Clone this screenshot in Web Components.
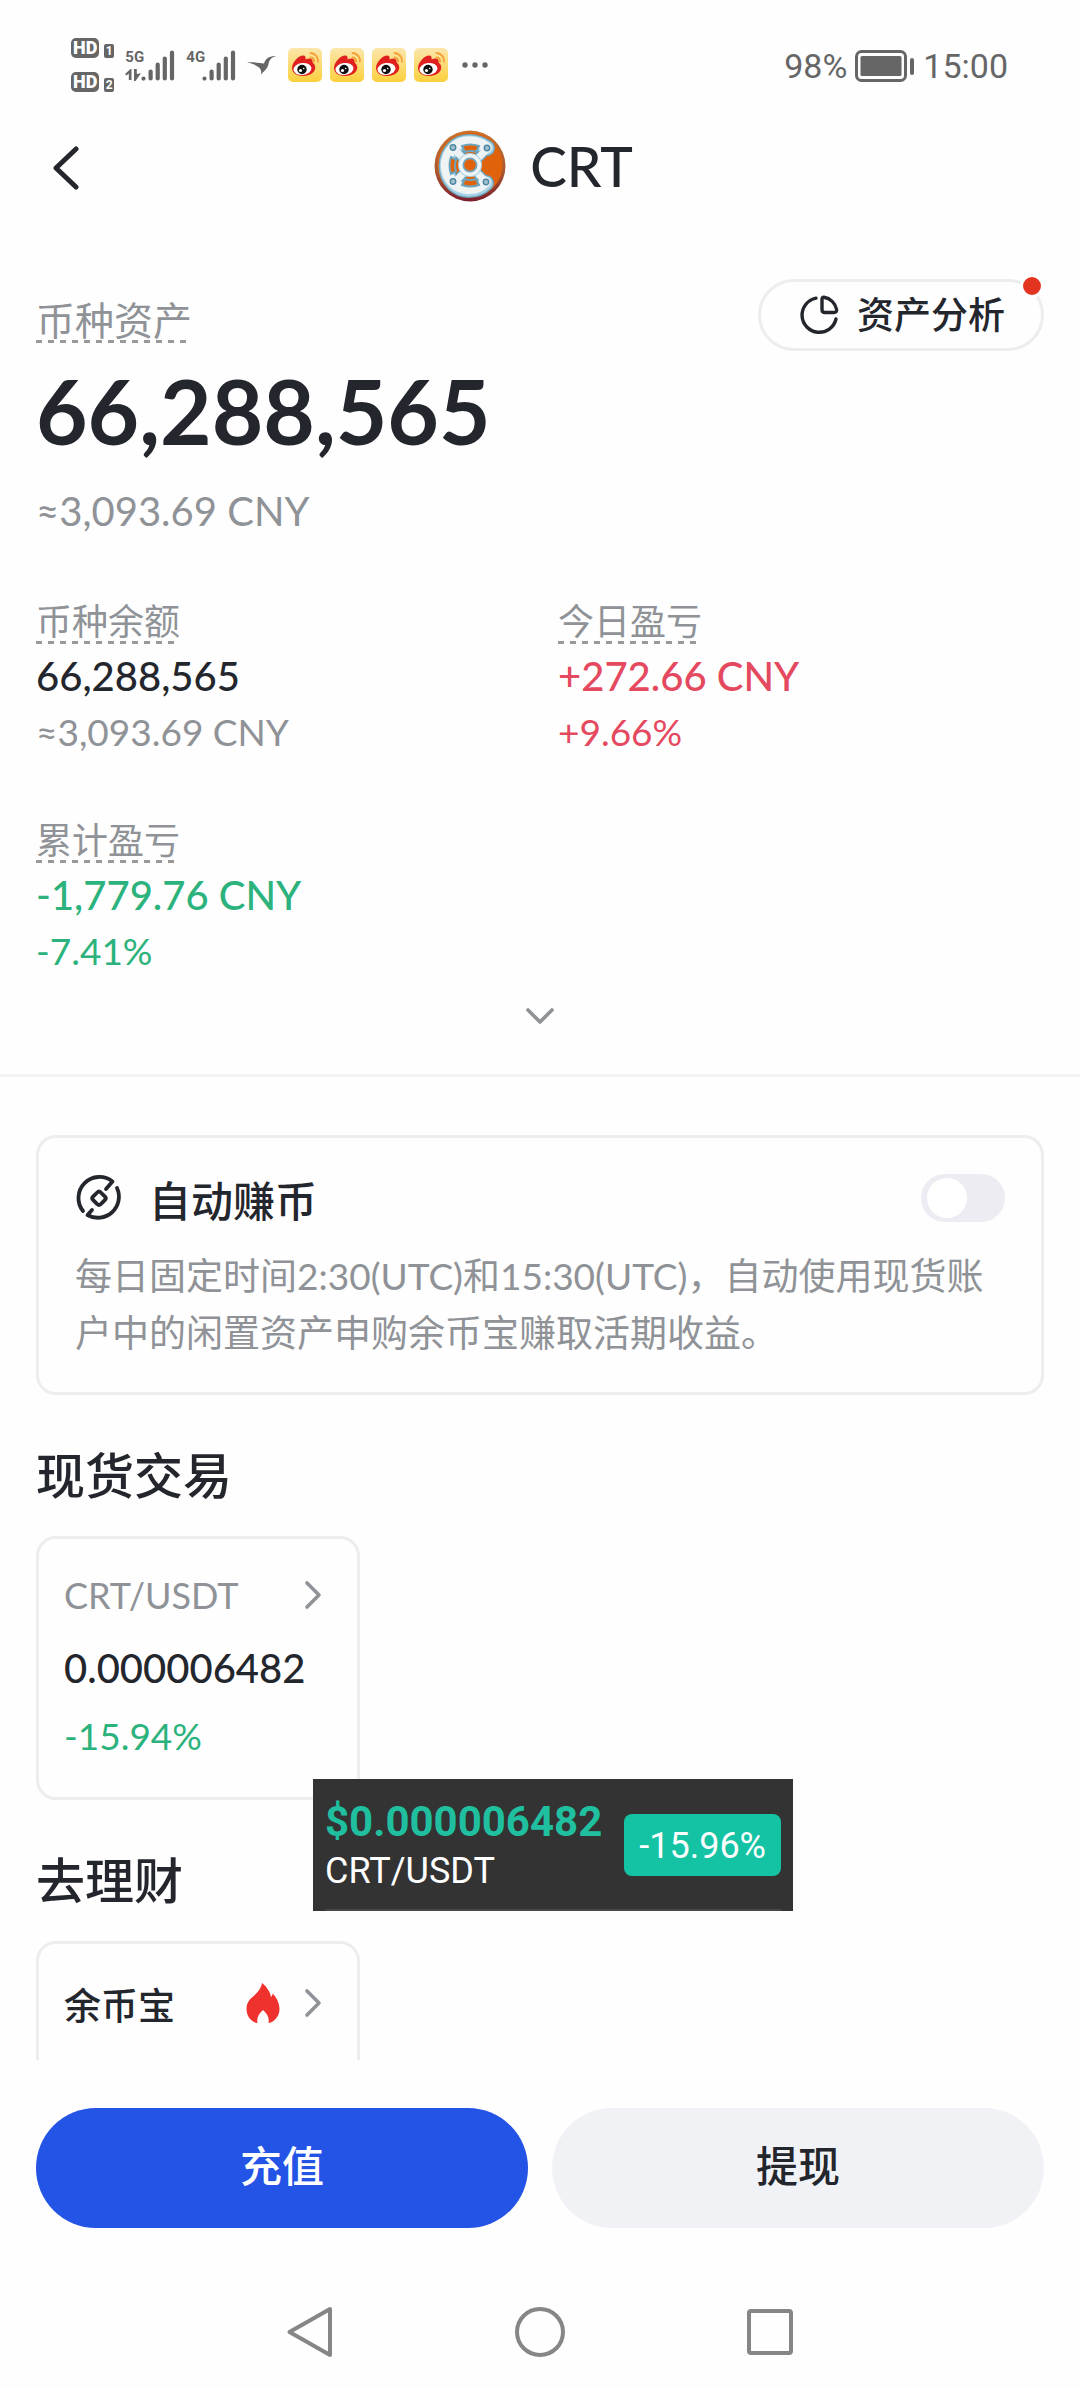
<!DOCTYPE html>
<html lang="zh-CN">
<head>
<meta charset="utf-8">
<meta name="viewport" content="width=device-width, initial-scale=1">
<title>CRT</title>
<style>
  :root {
    --ink: #24262d;
    --muted: #8f9296;
    --line: #ededef;
    --up: #e4495f;
    --down: #2cb27c;
    --brand: #2354e6;
    --sys: #666;
  }
  body {
    margin: 0;
    background: #fefefe;
    color: var(--ink);
    font-family: Lato, "Noto Sans CJK SC", sans-serif;
  }
</style>
</head>
<body>
<asset-page></asset-page>

<script>
const RESET = `
  *, *::before, *::after { box-sizing: border-box; }
  button { font: inherit; color: inherit; background: none; border: 0; margin: 0; padding: 0; cursor: pointer; }
  a { color: inherit; text-decoration: none; }
  h1, h2, p { margin: 0; font-weight: inherit; }
`;

function define(name, markup, setup) {
  const template = document.createElement('template');
  template.innerHTML = markup;
  customElements.define(name, class extends HTMLElement {
    constructor() {
      super();
      this.attachShadow({ mode: 'open' }).append(template.content.cloneNode(true));
    }
    connectedCallback() { if (setup) setup(this, this.shadowRoot); }
  });
}

/* name: [width, height, drawing] */
const ICONS = {
  back: [28, 46, '<path d="M25 4 5 23 25 42" fill="none" stroke="#24262d" stroke-width="5" stroke-linecap="round" stroke-linejoin="round"/>'],
  down: [28, 18, '<path d="M2 3 14 15 26 3" fill="none" stroke="#8f9296" stroke-width="3.6" stroke-linecap="round" stroke-linejoin="round"/>'],
  right: [18, 30, '<path d="M3 3 15 15 3 27" fill="none" stroke="#8f9296" stroke-width="3.6" stroke-linecap="round" stroke-linejoin="round"/>'],
  pie: [40, 40, '<g fill="none" stroke="#24262d" stroke-width="3.4" stroke-linecap="round" stroke-linejoin="round"><path d="M17 3.2A17.2 17.2 0 1 0 37 24"/><path d="M23 4.5v10q0 3 3 3h9q3 0 2.600-3A15.500 15.500 0 0 0 25 2.200q-2 0-2 2.300z"/></g>'],
  coin: [48, 48, '<g fill="none" stroke="#24262d" stroke-width="3.800" stroke-linecap="round" stroke-linejoin="round"><path d="M31 15 37.500 7.500A21 21 0 0 0 8 37"/><path d="M17 36 12.500 41A21 21 0 0 0 42 14"/><path d="M22.200 18.500q1.800-1.800 3.600 0l4.200 4.200q1.600 1.600 0 3.200l-4.200 4.200q-1.800 1.600-3.600 0L18 25.900q-1.600-1.600 0-3.200z"/></g>'],
  flame: [34, 42, '<path d="M16 1C20 4 24 9 25 15c1-1 1.500-2 1.700-3.500C31 16 33.500 22 33.500 27c0 7-5 13-11 14 1-5-1-9-5.500-13-4.500 4-6.500 8-5.500 13C5 40 .5 34 .5 27c0-6 3-9.500 6-12C11 11 15 7 16 1z" fill="#f0322e"/>'],
  signal: [34, 31, '<g stroke="#666" stroke-width="4.200" stroke-linecap="round"><path d="M2.500 28.500v.1M9.600 21.500v7M16.700 14.500v14M23.800 8.500v20M31 2.500v26"/></g>'],
  arrows: [16, 12, '<path d="M0 5 5.500 0h1v11H3.800V4.500L1.500 6.500zM9 0h2.800v5L16 4.200 10.500 12H9z" fill="#666"/>'],
  bird: [30, 20, '<path d="M0 7.500C7 7 13 8 17 8.500 19 3 22 1 29.500 1 24 2.500 22.500 4.500 21.500 9c-1 5-4.500 7-7.500 10.500.5-3 0-5.500-2-7C9 10 6 8.500 0 7.500z" fill="#666"/>'],
  dots: [26, 6, '<g fill="#666"><circle cx="3" cy="3" r="2.700"/><circle cx="13" cy="3" r="2.700"/><circle cx="23" cy="3" r="2.700"/></g>'],
  battery: [60, 32, '<rect x="1.500" y="1.500" width="49" height="29" rx="5" fill="none" stroke="#666" stroke-width="3"/><rect x="5.500" y="6" width="41" height="20" rx="1.500" fill="#666"/><rect x="55" y="8" width="4" height="17" rx="2" fill="#666"/>'],
  weibo: [34, 34, '<defs><linearGradient id="y" x1="0" y1="0" x2="0" y2="1"><stop offset="0" stop-color="#fbe6ac"/><stop offset="1" stop-color="#fbd03d"/></linearGradient></defs><rect width="34" height="34" rx="5" fill="url(#y)"/><path d="M4 20C4 14 11 7.500 15 7.500c2.500 0 3 2 2.500 4 3-1.800 7.500-1.600 7 2 0 1.200 1 2 2 3 3 6-3 11.500-11.500 11.500C9 28 4 25 4 20z" fill="#e0201f"/><ellipse cx="14.500" cy="21" rx="9" ry="6" fill="#fff" transform="rotate(-6 14.500 21)"/><circle cx="14" cy="21.500" r="4.700" fill="#111"/><circle cx="12.500" cy="22.500" r="1.600" fill="#fff"/><circle cx="15.700" cy="20.500" r=".8" fill="#fff"/><path d="M22.500 5A8 8 0 0 1 30 13.500M22.500 9.500a4 4 0 0 1 3.600 4" fill="none" stroke="#f3a03a" stroke-width="1.900" stroke-linecap="round"/>'],
  navback: [50, 54, '<path d="M45 4V50L4.500 27z" fill="none" stroke="#868686" stroke-width="4" stroke-linejoin="round"/>'],
  navhome: [50, 54, '<circle cx="25" cy="27" r="23" fill="none" stroke="#868686" stroke-width="4"/>'],
  navtask: [50, 54, '<rect x="4" y="6" width="42" height="42" rx="2" fill="none" stroke="#868686" stroke-width="4"/>'],
  crt: [72, 72, `<defs><linearGradient id="rim" x1="0" y1="0" x2="0" y2="1"><stop offset="0" stop-color="#c97330"/><stop offset=".6" stop-color="#a9552f"/><stop offset="1" stop-color="#7a1d2c"/></linearGradient></defs>
    <circle cx="36" cy="36" r="35.500" fill="url(#rim)"/><circle cx="36" cy="35" r="32.500" fill="#e0630b"/>
    <g fill="none" stroke-linecap="round" stroke-linejoin="round">
      <path d="M53 18C42 10 28 10 20 18 10 28 10 44 20 54 28 62 43 62 52 53" stroke="#6ba5bf" stroke-width="16"/>
      <path d="M20 19 52 52M53 19 20 53" stroke="#6ba5bf" stroke-width="10"/>
      <path d="M53 18C42 10 28 10 20 18 10 28 10 44 20 54 28 62 43 62 52 53" stroke="#a9d3e4" stroke-width="13.500"/>
      <path d="M52.500 17.500C42 9.500 28 9.500 19.500 17.500 9.500 28 9.500 43 19.500 53 28 61 43 61 51.500 52" stroke="#f0f3f4" stroke-width="10.500"/>
      <path d="M20 19 52 52M53 19 20 53" stroke="#edf2f4" stroke-width="7"/>
    </g>
    <circle cx="36" cy="35" r="12" fill="#a9d3e4"/><circle cx="36" cy="35" r="11" fill="#eef3f5"/><circle cx="36" cy="35" r="7.500" fill="#6fa6be"/><circle cx="36" cy="35" r="5.800" fill="#e0630b"/>
    <path d="M28 16q8-3 17 0l-3 6q-5-2-11 0zM28 55q8 3 17 0l-3-6q-5 2-11 0zM17 27q-3 8 0 17l5-3q-2-5 0-11z" fill="#e0630b" stroke="#6ba5bf" stroke-width="2"/>
    <g fill="#a5c3cf" stroke="#4d88a5" stroke-width="1.500"><circle cx="19" cy="17.500" r="2.700"/><circle cx="53" cy="18" r="2.700"/><circle cx="19" cy="51.500" r="2.700"/><circle cx="52" cy="52" r="2.700"/></g>`]
};

define('ui-icon', `<style>:host { display: block; flex: none; } svg { display: block; }</style>`, (el, root) => {
  const [w, h, art] = ICONS[el.getAttribute('name')];
  root.innerHTML += `<svg width="${w}" height="${h}" viewBox="0 0 ${w} ${h}" aria-hidden="true">${art}</svg>`;
});

define('hd-badge', `<style>
  :host { display: flex; align-items: flex-end; gap: 5px; font: bold 18px/20px Roboto, sans-serif; }
  b { padding: 0 2px; border-radius: 5px; background: var(--sys); color: #fff; }
  i { font: bold 12px/14px Roboto, sans-serif; width: 10px; text-align: center; border-radius: 2px; background: var(--sys); color: #fff; }
</style><b>HD</b><i><slot></slot></i>`);

define('status-bar', `<style>${RESET}
  :host { display: flex; justify-content: space-between; align-items: center; height: 130px; padding: 0 72px 0 71px; color: var(--sys); font-family: Roboto, sans-serif; }
  .left, .right, .cell, .apps { display: flex; align-items: center; }
  .left { gap: 11px; }
  .hd { display: grid; gap: 14px; }
  .cell { align-items: flex-end; }
  .gen { font: bold 15px/16px Roboto, sans-serif; width: 16px; height: 32px; display: grid; align-content: space-between; }
  .apps { gap: 8px; }
  .apps ui-icon:last-child { margin-left: 6px; }
  .right { gap: 8px; font-size: 34px; line-height: 40px; padding-top: 2px; }
</style>
<div class="left">
  <div class="hd"><hd-badge>1</hd-badge><hd-badge>2</hd-badge></div>
  <div class="cell"><span class="gen">5G<ui-icon name="arrows"></ui-icon></span><ui-icon name="signal"></ui-icon></div>
  <div class="cell"><span class="gen">4G</span><ui-icon name="signal"></ui-icon></div>
  <ui-icon name="bird"></ui-icon>
  <div class="apps"><ui-icon name="weibo"></ui-icon><ui-icon name="weibo"></ui-icon><ui-icon name="weibo"></ui-icon><ui-icon name="weibo"></ui-icon><ui-icon name="dots"></ui-icon></div>
</div>
<div class="right"><span>98%</span><ui-icon name="battery"></ui-icon><span>15:00</span></div>`);

define('page-header', `<style>${RESET}
  :host { display: grid; grid-template-columns: 1fr auto 1fr; align-items: center; height: 72px; padding: 0 64px 0 51px; }
  h1 { display: flex; align-items: center; gap: 24px; font-size: 55px; font-weight: 500; line-height: 70px; }
  button { justify-self: start; padding-top: 4px; }
</style>
<button aria-label="返回"><ui-icon name="back"></ui-icon></button>
<h1><ui-icon name="crt"></ui-icon><slot></slot></h1>`);

/* Caption with a dashed underline */
define('hint-label', `<style>
  :host { display: block; width: fit-content; font-size: 36px; line-height: 42px; height: 44px; color: var(--muted);
    background: repeating-linear-gradient(90deg, #999 0 6px, transparent 6px 12px) left bottom / 100% 3px no-repeat; }
</style><slot></slot>`);

define('analysis-button', `<style>${RESET}
  :host { display: block; position: relative; }
  button { display: flex; align-items: center; gap: 18px; height: 72px; padding: 0 36px 0 38px; border: 3px solid var(--line); border-radius: 36px; font-size: 37px; font-weight: 500; line-height: 48px; }
  .dot { position: absolute; top: -5px; right: 0; width: 24px; height: 24px; border: 3px solid #fff; border-radius: 50%; background: #e33422; }
</style>
<button><ui-icon name="pie"></ui-icon><slot></slot></button><span class="dot"></span>`);

define('stat-item', `<style>
  :host { display: block; font-size: 37px; line-height: 56px; color: var(--muted); }
  .value { font-size: 40px; font-weight: 500; margin-top: 4px; color: var(--ink); }
  :host([trend="up"]) :is(.value, .sub) { color: var(--up); }
  :host([trend="down"]) :is(.value, .sub) { color: var(--down); }
</style>
<hint-label><slot name="label"></slot></hint-label>
<div class="value"><slot name="value"></slot></div>
<div class="sub"><slot></slot></div>`);

define('asset-summary', `<style>${RESET}
  :host { display: block; padding: 77px 36px 34px; border-bottom: 3px solid #f3f3f4; }
  .top { display: flex; justify-content: space-between; align-items: flex-end; }
  .top hint-label { font-size: 39px; margin-bottom: 8px; }
  .total { font-size: 89px; font-weight: 700; line-height: 96px; margin-top: 12px; }
  .approx { font-size: 40px; line-height: 48px; margin-top: 28px; color: var(--muted); }
  .stats { display: grid; grid-template-columns: 1fr 1fr; gap: 59px 36px; margin-top: 65px; }
  .more { display: grid; place-items: center; width: 100%; height: 48px; margin-top: 13px; }
</style>
<div class="top"><hint-label>币种资产</hint-label><analysis-button>资产分析</analysis-button></div>
<p class="total">66,288,565</p>
<p class="approx">≈3,093.69 CNY</p>
<div class="stats">
  <stat-item><span slot="label">币种余额</span><span slot="value">66,288,565</span>≈3,093.69 CNY</stat-item>
  <stat-item trend="up"><span slot="label">今日盈亏</span><span slot="value">+272.66 CNY</span>+9.66%</stat-item>
  <stat-item trend="down"><span slot="label">累计盈亏</span><span slot="value">-1,779.76 CNY</span>-7.41%</stat-item>
</div>
<button class="more" aria-label="展开"><ui-icon name="down"></ui-icon></button>`);

define('auto-earn', `<style>${RESET}
  :host { display: block; box-sizing: border-box; margin: 58px 36px 0; padding: 36px 36px 31px; border: 3px solid var(--line); border-radius: 20px; }
  label { display: flex; align-items: center; height: 48px; font-size: 42px; font-weight: 500; line-height: 48px; }
  .name { flex: 1; padding: 6px 0 0 26px; }
  input { appearance: none; flex: none; width: 84px; height: 48px; margin: 0; border-radius: 24px; background: #ececf2; }
  input::before { content: ""; display: block; width: 40px; height: 40px; margin: 4px 6px; border-radius: 50%; background: #fff; }
  input:checked { background: var(--brand); }
  input:checked::before { margin-left: 38px; }
  p { margin-top: 25px; font-size: 37px; line-height: 57px; color: var(--muted); }
</style>
<label><ui-icon name="coin"></ui-icon><span class="name">自动赚币</span><input type="checkbox" role="switch"></label>
<p>每日固定时间2:30(UTC)和15:30(UTC)，自动使用现货账户中的闲置资产申购余币宝赚取活期收益。</p>`);

define('entry-card', `<style>${RESET}
  :host { display: block; width: 324px; }
  a { display: block; min-height: 264px; padding: 30px 35px 35px 25px; border: 3px solid var(--line); border-radius: 20px; }
  .head { display: flex; align-items: center; justify-content: space-between; font-size: 36px; line-height: 52px; }
  .end { display: flex; align-items: center; gap: 24px; }
  ::slotted([slot="value"]) { display: block; font-size: 40px; font-weight: 500; line-height: 56px; margin-top: 19px; }
  ::slotted([slot="change"]) { display: block; font-size: 37px; line-height: 52px; margin-top: 14px; color: var(--down); }
</style>
<a href="#"><div class="head"><slot></slot><span class="end"><slot name="badge"></slot><ui-icon name="right"></ui-icon></span></div>
<slot name="value"></slot><slot name="change"></slot></a>`);

define('page-section', `<style>${RESET}
  :host { display: block; padding: 50px 36px 0; }
  h2 { font-size: 49px; font-weight: 500; line-height: 60px; margin-bottom: 31px; }
</style><h2><slot name="title"></slot></h2><slot></slot>`);

define('price-float', `<style>
  :host { display: flex; justify-content: space-between; align-items: flex-start; box-sizing: border-box; width: 480px; height: 132px; padding: 0 12px; background: #333; color: #fff; font: 36px/48px Roboto, sans-serif;
    background-image: linear-gradient(#4a4648, #4a4648); background-size: 456px 2px; background-position: 12px bottom; background-repeat: no-repeat; }
  .quote { padding-top: 18px; }
  b { display: block; font-size: 42px; line-height: 50px; color: #1fbf9f; }
  .pct { margin-top: 35px; padding: 2px 15px 0; border-radius: 8px; line-height: 60px; background: #14c3a4; }
</style>
<div class="quote"><b>$0.000006482</b>CRT/USDT</div><span class="pct">-15.96%</span>`);

define('action-bar', `<style>${RESET}
  :host { display: grid; grid-template-columns: 1fr 1fr; gap: 24px; padding: 48px 36px; }
  button { height: 120px; padding-bottom: 10px; border-radius: 60px; font-size: 42px; font-weight: 500; background: #f0f2f6; }
  .primary { background: var(--brand); color: #fff; }
</style><button class="primary">充值</button><button>提现</button>`);

define('system-nav', `<style>${RESET}
  :host { display: grid; grid-template-columns: repeat(3, 1fr); height: 112px; padding: 0 18%; }
  button { display: grid; place-items: center; }
</style>
<button aria-label="返回"><ui-icon name="navback"></ui-icon></button>
<button aria-label="主页"><ui-icon name="navhome"></ui-icon></button>
<button aria-label="最近任务"><ui-icon name="navtask"></ui-icon></button>`);

define('asset-page', `<style>
  :host { display: flex; flex-direction: column; height: 100vh; position: relative; }
  main { flex: 1 1 0; min-height: 0; overflow-y: auto; scrollbar-width: none; }
  .pair { color: var(--muted); }
  .name { font-size: 37px; font-weight: 500; padding-top: 6px; }
  price-float { position: absolute; left: 313px; top: 1779px; }
</style>
<status-bar></status-bar>
<page-header>CRT</page-header>
<main>
  <asset-summary></asset-summary>
  <auto-earn></auto-earn>
  <page-section><span slot="title">现货交易</span>
    <entry-card><span class="pair">CRT/USDT</span><span slot="value">0.000006482</span><span slot="change">-15.94%</span></entry-card>
  </page-section>
  <page-section><span slot="title">去理财</span>
    <entry-card><span class="name">余币宝</span><ui-icon slot="badge" name="flame"></ui-icon></entry-card>
  </page-section>
</main>
<action-bar></action-bar>
<system-nav></system-nav>
<price-float></price-float>`);
</script>
</body>
</html>
